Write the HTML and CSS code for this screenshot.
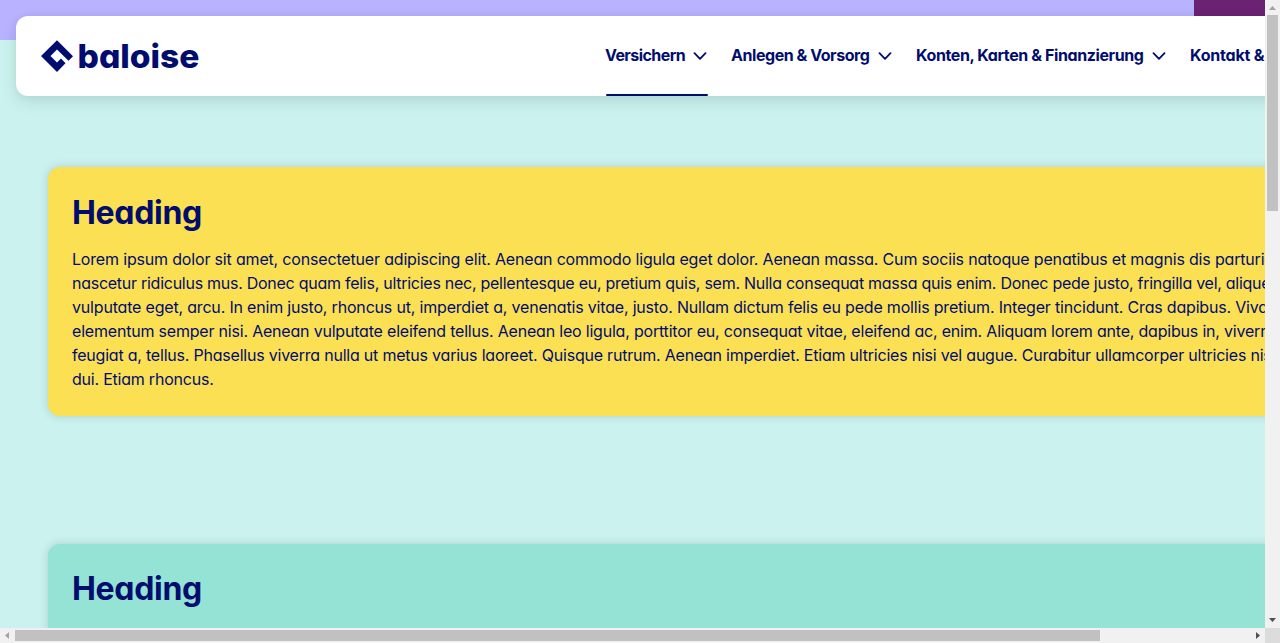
FILE: index.html
```html
<!DOCTYPE html>
<html lang="de">
<head>
<meta charset="utf-8">
<title>Baloise</title>
<link rel="stylesheet" href="styles.css">
</head>
<body>
<div class="window">
  <div class="viewport">
    <div class="stripe"><div class="stripe-accent"></div></div>
    <header class="navbar">
      <svg class="logo" width="162" height="34" viewBox="0 0 162 34" aria-label="baloise">
        <path d="M17 1.2 33 17.2 28.500 21.700 17 10.500 10.500 17 17 23.500 21 19.500 25.500 24.300 17 33 1 17Z"/>
        <text x="37.500" y="28.500" textLength="122" lengthAdjust="spacingAndGlyphs">baloise</text>
      </svg>
      <nav class="menu">
        <a class="item active"><span class="n1">Versichern</span><svg class="chev" viewBox="0 0 14 8"><path d="M1.500 1.200 7 6.800 12.500 1.200"/></svg></a>
        <a class="item"><span class="n2">Anlegen &amp; Vorsorg</span><svg class="chev" viewBox="0 0 14 8"><path d="M1.500 1.200 7 6.800 12.500 1.200"/></svg></a>
        <a class="item"><span class="n3">Konten, Karten &amp; Finanzierung</span><svg class="chev" viewBox="0 0 14 8"><path d="M1.500 1.200 7 6.800 12.500 1.200"/></svg></a>
        <a class="item"><span class="n4">Kontakt &amp; Services</span></a>
      </nav>
    </header>
    <main class="content">
      <section class="card yellow">
        <h2>Heading</h2>
        <p>
          <span class="line l1">Lorem ipsum dolor sit amet, consectetuer adipiscing elit. Aenean commodo ligula eget dolor. Aenean massa. Cum sociis natoque penatibus et magnis dis parturient montes,</span>
          <span class="line l2">nascetur ridiculus mus. Donec quam felis, ultricies nec, pellentesque eu, pretium quis, sem. Nulla consequat massa quis enim. Donec pede justo, fringilla vel, aliquet nec,</span>
          <span class="line l3">vulputate eget, arcu. In enim justo, rhoncus ut, imperdiet a, venenatis vitae, justo. Nullam dictum felis eu pede mollis pretium. Integer tincidunt. Cras dapibus. Vivamus</span>
          <span class="line l4">elementum semper nisi. Aenean vulputate eleifend tellus. Aenean leo ligula, porttitor eu, consequat vitae, eleifend ac, enim. Aliquam lorem ante, dapibus in, viverra quis,</span>
          <span class="line l5">feugiat a, tellus. Phasellus viverra nulla ut metus varius laoreet. Quisque rutrum. Aenean imperdiet. Etiam ultricies nisi vel augue. Curabitur ullamcorper ultricies nisi. Nam eget</span>
          <span class="line l6">dui. Etiam rhoncus.</span>
        </p>
      </section>
      <section class="card green">
        <h2>Heading</h2>
      </section>
    </main>
  </div>
  <div class="bar vertical">
    <svg width="15" height="15"><path class="off" d="M4 10h7L7.500 6Z"/></svg>
    <div class="thumb"></div>
    <svg class="end" width="15" height="15"><path d="M4 5h7L7.500 9Z"/></svg>
  </div>
  <div class="bar horizontal">
    <svg width="15" height="15"><path class="off" d="M9 4v7L5 7.500Z"/></svg>
    <div class="thumb"></div>
    <svg class="end" width="15" height="15"><path d="M6 4v7L10 7.500Z"/></svg>
  </div>
  <div class="corner"></div>
</div>
</body>
</html>
```
FILE: styles.css
```css
* { box-sizing: border-box; }
body { margin: 0; font-family: Inter, "Open Sans", sans-serif; font-feature-settings: "cv11"; color: #000d6e; }
.window { display: grid; grid-template: 628px 15px / 1265px 15px; width: 1280px; height: 643px; overflow: hidden; }
.viewport { overflow: hidden; background: #cbf2ee; }
.stripe { height: 40px; background: #b8b2ff; display: flex; justify-content: flex-end; }
.stripe-accent { width: 71px; background: #6c2273; }
.navbar { position: relative; margin: -24px 0 0 16px; width: 1400px; height: 80px; background: #fff; border-radius: 12px; display: flex; box-shadow: 0 0 8px rgba(0, 40, 40, .04), 0 6px 16px rgba(0, 40, 30, .11); }
.logo { margin: 23px 0 0 24px; flex: none; }
.logo path { fill: #000d6e; }
.logo text { font: 800 33px Inter, sans-serif; font-feature-settings: "cv11"; fill: #000d6e; }
.menu { display: flex; gap: 24px; margin-left: 403px; }
.item { position: relative; display: flex; align-items: center; flex: none; gap: 8px; font-size: 16px; font-weight: 700; white-space: nowrap; line-height: 24px; }
.item span { flex: none; padding-bottom: 2px; }
.item.active::after { content: ""; position: absolute; left: 1px; width: 102px; bottom: 0; height: 2px; border-radius: 1px; background: #000d6e; }
.n1 { width: 80px; letter-spacing: -.57px; }
.n2 { width: 139px; letter-spacing: -.45px; }
.n3 { width: 228px; letter-spacing: -.4px; }
.n4 { letter-spacing: -.2px; }
.chev { width: 14px; height: 8px; fill: none; stroke: #000d6e; stroke-width: 1.8; stroke-linecap: round; stroke-linejoin: round; }
.content { padding: 71px 0 0 48px; display: flex; flex-direction: column; gap: 128px; }
.card { width: 1400px; height: 249px; padding: 24px; border-radius: 12px; box-shadow: 0 0 10px rgba(0, 50, 50, .17); }
.yellow { background: #fbe053; }
.green { background: #94e3d4; }
h2 { margin: 0 0 14px; padding-top: 2px; font-size: 32px; line-height: 40px; font-weight: 700; letter-spacing: -.3px; }
.green h2 { padding-top: 1px; }
p { margin: 0; font-size: 16px; line-height: 24px; font-weight: 400; }
.line { display: block; white-space: nowrap; }
.l1 { letter-spacing: -.175px; }
.l2 { letter-spacing: -.265px; }
.l3 { letter-spacing: -.185px; }
.l4 { letter-spacing: -.2px; }
.l5 { letter-spacing: -.215px; }
.l6 { letter-spacing: -.22px; }
.bar { background: #f1f1f1; display: flex; }
.bar svg { flex: none; fill: #505050; }
.bar .off { fill: #a3a3a3; }
.thumb { background: #c1c1c1; flex: none; }
.end { margin: auto 0 0 auto; }
.vertical { grid-area: 1 / 2; flex-direction: column; }
.vertical .thumb { width: 11px; height: 196px; margin-left: 2px; }
.horizontal { grid-area: 2 / 1; }
.horizontal .thumb { width: 1085px; height: 11px; margin-top: 2px; }
.corner { background: #dcdcdc; }
```
